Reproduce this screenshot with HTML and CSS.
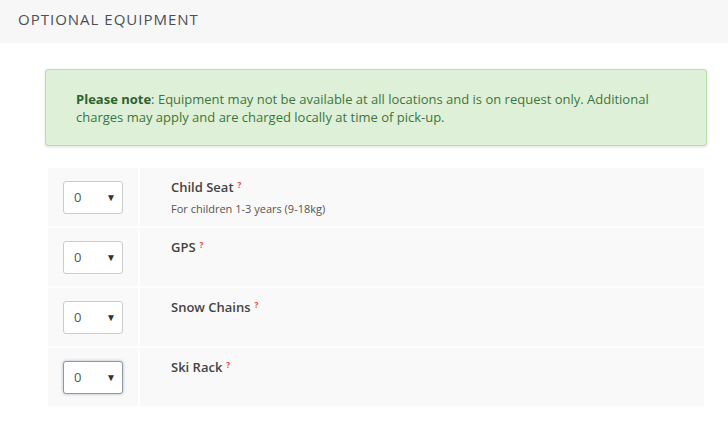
FILE: index.html
```html
<!DOCTYPE html>
<html>
<head>
<meta charset="utf-8">
<link rel="stylesheet" href="styles.css">
</head>
<body>
<div class="header">OPTIONAL EQUIPMENT</div>
<div class="content">
  <p class="alert"><strong>Please note</strong>: Equipment may not be available at all locations and is on request only. Additional charges may apply and are charged locally at time of pick-up.</p>
  <table class="equip">
    <tr>
      <td class="qty"><div class="sel"><select><option>0</option></select><span class="arrow">▼</span></div></td>
      <td class="info"><div class="name">Child Seat<span class="q">?</span></div><div class="desc">For children 1-3 years (9-18kg)</div></td>
    </tr>
    <tr>
      <td class="qty"><div class="sel"><select><option>0</option></select><span class="arrow">▼</span></div></td>
      <td class="info"><div class="name">GPS<span class="q">?</span></div></td>
    </tr>
    <tr>
      <td class="qty"><div class="sel"><select><option>0</option></select><span class="arrow">▼</span></div></td>
      <td class="info"><div class="name">Snow Chains<span class="q">?</span></div></td>
    </tr>
    <tr>
      <td class="qty"><div class="sel focus"><select><option>0</option></select><span class="arrow">▼</span></div></td>
      <td class="info"><div class="name">Ski Rack<span class="q">?</span></div></td>
    </tr>
  </table>
</div>
</body>
</html>
```
FILE: styles.css
```css
html, body {
  margin: 0;
  padding: 0;
  background: #fff;
  font-family: "Open Sans", "Liberation Sans", sans-serif;
  color: #444;
}
.header {
  background: #f7f7f7;
  height: 43px;
  line-height: 38px;
  padding: 0 18px;
  font-size: 15px;
  letter-spacing: 1px;
  color: #4a4f5a;
}
.content {
  padding: 0 21px 0 45px;
}
.alert {
  margin: 26px 0 0 0;
  background: #dff0d8;
  border: 1px solid #b7dfa8;
  border-radius: 3px;
  box-shadow: 0 1px 3px rgba(0,0,0,0.12);
  padding: 20px 30px 19px 30px;
  font-size: 13px;
  line-height: 18px;
  color: #3c763d;
}
.alert strong {
  font-weight: 700;
  color: #2f6130;
}
.equip {
  margin-top: 20px;
  width: calc(100% - 2px);
  margin-left: 1px;
  border-collapse: separate;
  border-spacing: 2px;
}
.equip td {
  background: #f9f9f9;
  height: 58px;
  padding: 0;
}
.qty {
  width: 90px;
  text-align: center;
  vertical-align: middle;
}
.sel {
  position: relative;
  display: inline-block;
  width: 60px;
  height: 33px;
  vertical-align: middle;
}
.sel select {
  appearance: none;
  -webkit-appearance: none;
  width: 60px;
  height: 33px;
  box-sizing: border-box;
  border: 1px solid #ccc;
  border-radius: 3px;
  background: #fff;
  padding: 0 0 0 10px;
  font-family: "Open Sans", "Liberation Sans", sans-serif;
  font-size: 13px;
  color: #555;
  outline: none;
}
.sel.focus select {
  border-color: #8a9aab;
  box-shadow: 0 0 3px rgba(90,110,130,0.5);
}
.sel .arrow {
  position: absolute;
  right: 7px;
  top: 10px;
  font-size: 10px;
  line-height: 12px;
  color: #333;
  pointer-events: none;
}
.info {
  vertical-align: top;
  padding: 8px 0 0 31px !important;
  box-sizing: border-box;
}
.name {
  font-size: 13px;
  font-weight: 600;
  line-height: 18px;
  color: #444;
}
.q {
  color: #e8413c;
  font-size: 8px;
  font-weight: 700;
  vertical-align: 4px;
  margin-left: 4px;
}
.desc {
  font-size: 11px;
  line-height: 16px;
  margin-top: 5px;
  color: #555;
}
```
